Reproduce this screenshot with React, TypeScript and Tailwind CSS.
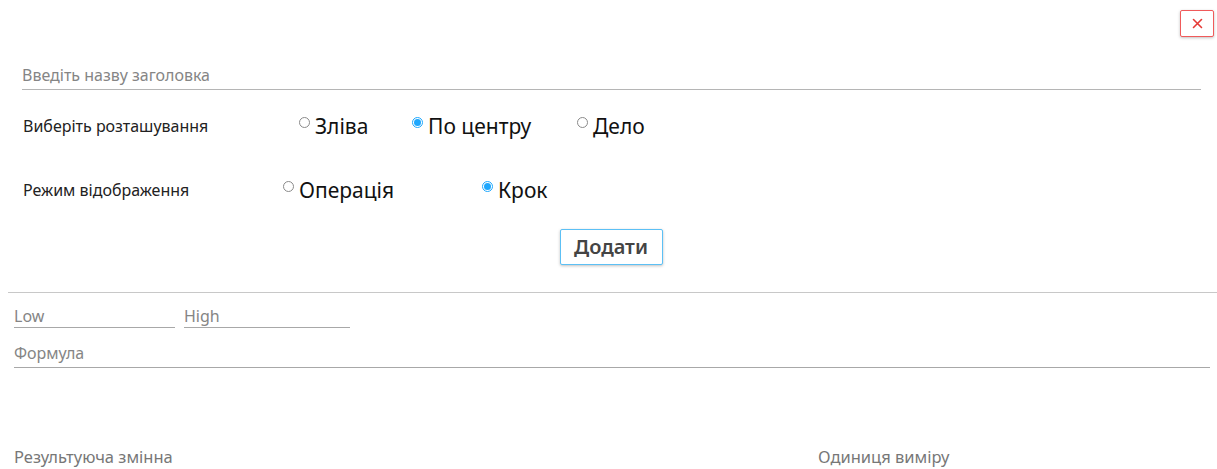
import { useState } from 'react';

type Option = { id: string; label: string; width: string };

function Radio({ checked, label, onSelect, className = '' }: { checked: boolean; label: string; onSelect: () => void; className?: string }) {
  return (
    <label className={`flex shrink-0 items-center cursor-pointer ${className}`} onClick={onSelect}>
      <span
        className={`mb-[7px] mr-[5px] box-border flex h-[11px] w-[11px] shrink-0 items-center justify-center rounded-full border ${
          checked ? 'border-[#1ea7fd]' : 'border-[#8a8a8a]'
        }`}
      >
        {checked && <span className="h-[7px] w-[7px] rounded-full bg-[#1ea7fd]" />}
      </span>
      <span className="text-[21px] leading-none text-[#111]">{label}</span>
    </label>
  );
}

const positions: Option[] = [
  { id: 'left', label: 'Зліва', width: 'w-[113px]' },
  { id: 'center', label: 'По центру', width: 'w-[165px]' },
  { id: 'right', label: 'Дело', width: 'w-[120px]' },
];

const modes: Option[] = [
  { id: 'op', label: 'Операція', width: 'w-[199px]' },
  { id: 'step', label: 'Крок', width: 'w-[120px]' },
];

export default function App() {
  const [position, setPosition] = useState('center');
  const [mode, setMode] = useState('step');

  return (
    <div className="h-[469px] w-full overflow-hidden bg-white font-['Noto_Sans','Open_Sans',sans-serif] text-[#222]">
      <div className="flex justify-end pr-[3px] pt-[10px]">
        <button className="flex h-[27px] w-[34px] items-center justify-center rounded-[2px] border border-[#f05a5a] bg-white shadow-[0_1px_3px_rgba(0,0,0,0.25)]">
          <svg width="11" height="11" viewBox="0 0 11 11" stroke="#e53935" strokeWidth="1.6" strokeLinecap="round">
            <path d="M1.5 1.5l8 8M9.5 1.5l-8 8" />
          </svg>
        </button>
      </div>

      <div className="ml-[22px] mr-[16px] mt-[25px] flex h-[28px] items-end border-b border-[#b5b5b5] pb-[3px]">
        <input
          className="w-full bg-transparent text-[16px] leading-none text-[#222] outline-none placeholder:text-[#858585]"
          placeholder="Введіть назву заголовка"
        />
      </div>

      <div className="ml-[23px] mt-[22px] flex h-[28px] items-center">
        <span className="w-[276px] shrink-0 text-[16px]">Виберіть розташування</span>
        {positions.map((p) => (
          <Radio key={p.id} className={p.width} checked={position === p.id} label={p.label} onSelect={() => setPosition(p.id)} />
        ))}
      </div>

      <div className="ml-[23px] mt-[36px] flex h-[28px] items-center">
        <span className="w-[260px] shrink-0 text-[16px]">Режим відображення</span>
        {modes.map((m) => (
          <Radio key={m.id} className={m.width} checked={mode === m.id} label={m.label} onSelect={() => setMode(m.id)} />
        ))}
      </div>

      <div className="mt-[25px] flex justify-center pl-[5px]">
        <button className="h-[36px] w-[103px] rounded-[2px] border border-[#5cc0f5] bg-white text-[20px] font-semibold text-[#444] shadow-[0_1px_3px_rgba(0,0,0,0.25)]">
          Додати
        </button>
      </div>

      <hr className="ml-[8px] mt-[27px] border-t border-[#c8c8c8]" />

      <div className="pl-[14px] pr-[7px]">
        <div className="mt-[15px] flex gap-[9px]">
          <div className="flex h-[20px] w-[161px] items-end border-b border-[#a8a8a8]">
            <input className="w-full bg-transparent text-[16px] leading-none outline-none placeholder:text-[#858585]" placeholder="Low" />
          </div>
          <div className="flex h-[20px] w-[166px] items-end border-b border-[#a8a8a8]">
            <input className="w-full bg-transparent text-[16px] leading-none outline-none placeholder:text-[#858585]" placeholder="High" />
          </div>
        </div>

        <div className="mt-[10px] flex h-[30px] items-end border-b border-[#a8a8a8] pb-[3px]">
          <input className="w-full bg-transparent text-[16px] leading-none outline-none placeholder:text-[#858585]" placeholder="Формула" />
        </div>

        <div className="mt-[77px] flex text-[16.5px] text-[#777]">
          <span className="w-[804px]">Результуюча змінна</span>
          <span>Одиниця виміру</span>
        </div>
      </div>
    </div>
  );
}
